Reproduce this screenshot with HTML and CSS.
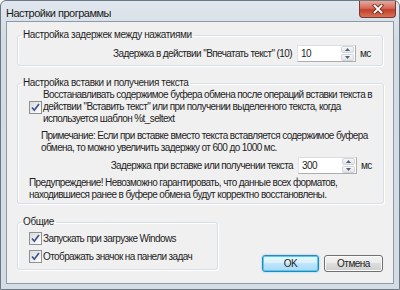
FILE: index.html
```html
<!DOCTYPE html>
<html lang="ru">
<head>
    <meta charset="UTF-8">
    <title>Настройки программы</title>
    <link rel="stylesheet" href="styles.css">
</head>
<body>
    <div class="window">
        <div class="titlebar">
            <span class="title">Настройки программы</span>
            <div class="close">
                <svg width="14" height="10" viewBox="0 0 14 10">
                    <path d="M3.5 1.5 L10.5 8.5 M10.5 1.5 L3.5 8.5" stroke="#6b2a22" stroke-width="3.6" stroke-linecap="square"/>
                    <path d="M3.5 1.5 L10.5 8.5 M10.5 1.5 L3.5 8.5" stroke="#ffffff" stroke-width="1.9" stroke-linecap="square"/>
                </svg>
            </div>
        </div>

        <div class="client">
            <fieldset class="group group-delay">
                <legend>Настройка задержек между нажатиями</legend>
                <div class="field-row">
                    <span>Задержка в действии "Впечатать текст" (10)</span>
                    <div class="spin">
                        <span class="spin-value">10</span>
                        <div class="spin-btns">
                            <div class="spin-btn"><svg width="5" height="3" viewBox="0 0 5 3"><path d="M0 3 L2.5 0 L5 3 Z" fill="#4d6185"/></svg></div>
                            <div class="spin-btn"><svg width="5" height="3" viewBox="0 0 5 3"><path d="M0 0 L2.5 3 L5 0 Z" fill="#4d6185"/></svg></div>
                        </div>
                    </div>
                    <span class="unit">мс</span>
                </div>
            </fieldset>

            <fieldset class="group group-paste">
                <legend>Настройка вставки и получения текста</legend>
                <div class="check-row">
                    <span class="checkbox">
                        <svg width="13" height="13" viewBox="0 0 13 13"><path d="M3 6.5 L5.3 9.2 L10 3" fill="none" stroke="#3c5490" stroke-width="1.7"/></svg>
                    </span>
                    <span>Восстанавливать содержимое буфера обмена после операций вставки текста в<br>действии "Вставить текст" или при получении выделенного текста, когда<br>используется шаблон %t_seltext</span>
                </div>
                <p class="note">Примечание: Если при вставке вместо текста вставляется содержимое буфера<br>обмена, то можно увеличить задержку от 600 до 1000 мс.</p>
                <div class="field-row">
                    <span>Задержка при вставке или получении текста</span>
                    <div class="spin">
                        <span class="spin-value">300</span>
                        <div class="spin-btns">
                            <div class="spin-btn"><svg width="5" height="3" viewBox="0 0 5 3"><path d="M0 3 L2.5 0 L5 3 Z" fill="#4d6185"/></svg></div>
                            <div class="spin-btn"><svg width="5" height="3" viewBox="0 0 5 3"><path d="M0 0 L2.5 3 L5 0 Z" fill="#4d6185"/></svg></div>
                        </div>
                    </div>
                    <span class="unit">мс</span>
                </div>
                <p class="warning">Предупреждение! Невозможно гарантировать, что данные всех форматов,<br>находившиеся ранее в буфере обмена будут корректно восстановлены.</p>
            </fieldset>

            <div class="bottom">
                <fieldset class="group group-common">
                    <legend>Общие</legend>
                    <div class="check-row">
                        <span class="checkbox">
                            <svg width="13" height="13" viewBox="0 0 13 13"><path d="M3 6.5 L5.3 9.2 L10 3" fill="none" stroke="#3c5490" stroke-width="1.7"/></svg>
                        </span>
                        <span>Запускать при загрузке Windows</span>
                    </div>
                    <div class="check-row">
                        <span class="checkbox">
                            <svg width="13" height="13" viewBox="0 0 13 13"><path d="M3 6.5 L5.3 9.2 L10 3" fill="none" stroke="#3c5490" stroke-width="1.7"/></svg>
                        </span>
                        <span>Отображать значок на панели задач</span>
                    </div>
                </fieldset>
                <div class="buttons">
                    <button class="btn btn-default">OK</button>
                    <button class="btn btn-cancel">Отмена</button>
                </div>
            </div>
        </div>
    </div>
</body>
</html>
```

FILE: styles.css
```css
* {
    box-sizing: border-box;
}

body {
    margin: 0;
    width: 400px;
    height: 290px;
    overflow: hidden;
    background: #ffffff;
    font-family: 'Liberation Sans', Arial, sans-serif;
    font-size: 10px;
    letter-spacing: -0.6px;
    color: #1e1e1e;
    white-space: nowrap;
}

.window {
    width: 400px;
    height: 290px;
    display: flex;
    flex-direction: column;
    padding: 0 5px 5px 5px;
    border: 1px solid #6d7885;
    border-radius: 6px 6px 0 0;
    background: linear-gradient(#e1e7ee, #d3dbe4 40px, #d4dce5);
}

.titlebar {
    height: 20px;
    display: flex;
    align-items: flex-start;
    justify-content: space-between;
}

.title {
    margin-top: 6px;
    font-size: 11px;
    letter-spacing: -0.5px;
    color: #1a1a1a;
}

.close {
    width: 37px;
    height: 17px;
    margin-right: -2px;
    display: flex;
    align-items: center;
    justify-content: center;
    border: 1px solid #7a3a34;
    border-top: none;
    border-radius: 0 0 4px 4px;
    background: linear-gradient(#e9a999, #d4695a 45%, #c2402d 55%, #d77354);
}

.client {
    flex: 1;
    display: flex;
    flex-direction: column;
    padding: 7px 10px 0 10px;
    border: 1px solid #8d9aa9;
    background: #f0f0f0;
}

.group {
    margin: 0;
    padding: 0 11px;
    border: 1px solid #d5dfe5;
    border-radius: 3px;
    box-shadow: inset 1px 1px 0 #ffffff, 1px 1px 0 #ffffff;
}

.group legend {
    padding: 0 2px;
    margin-left: -8px;
    font-size: 10px;
    letter-spacing: -0.4px;
    line-height: 12px;
}

.group-delay {
    padding-top: 4px;
    padding-bottom: 3px;
}

.field-row {
    display: flex;
    align-items: center;
    justify-content: flex-end;
    gap: 4px;
}

.field-row > span:first-child {
    margin-right: 1px;
}

.spin {
    width: 59px;
    height: 17px;
    display: flex;
    border: 1px solid #abadb3;
    border-top-color: #dcdde3;
    border-left-color: #e2e3ea;
    background: #ffffff;
}

.spin-value {
    flex: 1;
    padding: 2px 0 0 3px;
}

.spin-btns {
    width: 14px;
    display: flex;
    flex-direction: column;
    gap: 1px;
    padding: 0 1px 0 0;
}

.spin-btn {
    flex: 1;
    display: flex;
    align-items: center;
    justify-content: center;
    border: 1px solid #d2d5da;
    border-radius: 2px;
    background: linear-gradient(#f7f7f7, #e3e3e3);
}

.unit {
    width: 11px;
}

.group-paste {
    margin-top: 11px;
    padding-bottom: 2px;
}

.check-row {
    display: flex;
    align-items: center;
    gap: 1px;
    line-height: 12px;
}

.checkbox {
    flex: none;
    width: 13px;
    height: 13px;
    border: 1px solid #8e8f8f;
    background: linear-gradient(135deg, #d9dadc, #f4f4f4 70%, #ffffff);
    display: flex;
}

.checkbox svg {
    margin: -1px;
}

.note {
    margin: 5px 0 0 12px;
    line-height: 12px;
}

.group-paste .field-row {
    margin-top: 3px;
}

.warning {
    margin: 3px 0 0 0;
    line-height: 12px;
}

.bottom {
    margin-top: 12px;
    display: flex;
    align-items: flex-end;
    justify-content: space-between;
}

.group-common {
    width: 201px;
    padding-top: 4px;
    padding-bottom: 6px;
    display: flex;
    flex-direction: column;
    gap: 5px;
}

.buttons {
    display: flex;
    gap: 5px;
    margin-bottom: -2px;
}

.btn {
    width: 59px;
    height: 17px;
    padding: 0;
    font-family: inherit;
    font-size: 10px;
    letter-spacing: -0.5px;
    color: #1e1e1e;
    border: 1px solid #707070;
    border-radius: 3px;
    background: linear-gradient(#f2f2f2, #ebebeb 50%, #dddddd 50%, #cfcfcf);
    box-shadow: inset 0 0 0 1px #fcfcfc;
}

.btn-default {
    width: 57px;
    border-color: #3c7fb1;
    background: linear-gradient(#eaf6fd, #d9f0fc 50%, #bee6fd 50%, #a7d9f5);
    box-shadow: inset 0 0 0 1px #48d0f7, 0 0 2px #60c8f0;
}
```
